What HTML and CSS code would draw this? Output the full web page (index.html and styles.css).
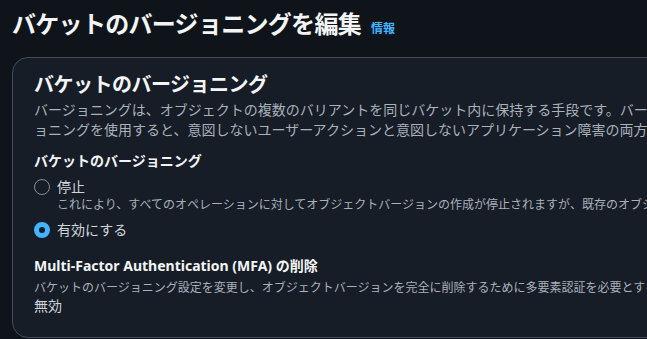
FILE: index.html
```html
<!DOCTYPE html>
<html lang="ja">
<head>
  <meta charset="UTF-8" />
  <title>バケットのバージョニングを編集</title>
  <link rel="stylesheet" href="styles.css">
</head>
<body>
  <div class="page">
    <div class="page-header">
      <h1>バケットのバージョニングを編集</h1>
      <a class="info-link" href="#">情報</a>
    </div>

    <div class="card">
      <h2>バケットのバージョニング</h2>
      <div class="card-desc">
        <span class="line">バージョニングは、オブジェクトの複数のバリアントを同じバケット内に保持する手段です。バージ</span>
        <span class="line">ョニングを使用すると、意図しないユーザーアクションと意図しないアプリケーション障害の両方から簡単に復旧できます。</span>
      </div>

      <div class="field-label">バケットのバージョニング</div>
      <div class="radio-group">
        <div class="radio">
          <span class="radio-dot"></span>
          <span class="radio-label">停止</span>
        </div>
        <div class="radio-desc">これにより、すべてのオペレーションに対してオブジェクトバージョンの作成が停止されますが、既存のオブジェクトバージョンは保持されます。</div>
        <div class="radio checked">
          <span class="radio-dot"></span>
          <span class="radio-label">有効にする</span>
        </div>
      </div>

      <div class="mfa">
        <div class="field-label">Multi-Factor Authentication (MFA) の削除</div>
        <div class="mfa-desc">バケットのバージョニング設定を変更し、オブジェクトバージョンを完全に削除するために多要素認証を必要とする追加の保護レイヤー。</div>
        <div class="mfa-value">無効</div>
      </div>
    </div>
  </div>
</body>
</html>
```

FILE: styles.css
```css
:root {
  --page-bg: #0f141a;
  --card-bg: #161d26;
  --border-color: #414d5c;
  --title-color: #f3f4f6;
  --text-color: #d1d5db;
  --muted-color: #a9b1bb;
  --link-color: #42b4ff;
}

* {
  box-sizing: border-box;
  margin: 0;
  padding: 0;
}

body {
  font-family: "Noto Sans", "Noto Sans CJK JP", sans-serif;
  background-color: var(--page-bg);
  color: var(--text-color);
  overflow: hidden;
  height: 339px;
}

.page {
  padding: 9px 0 0 12px;
}

.page-header {
  display: flex;
  align-items: baseline;
  gap: 10px;
  height: 30px;
}

h1 {
  font-size: 24px;
  line-height: 30px;
  font-weight: 700;
  letter-spacing: -0.7px;
  color: var(--title-color);
}

.info-link {
  font-size: 12px;
  font-weight: 700;
  color: var(--link-color);
  text-decoration: none;
}

.card {
  margin-top: 18px;
  width: 720px;
  background: var(--card-bg);
  border: 1px solid var(--border-color);
  border-radius: 16px;
  padding: 15px 0 22px 21px;
}

h2 {
  font-size: 20px;
  line-height: 24px;
  font-weight: 700;
  letter-spacing: -0.5px;
  color: var(--title-color);
}

.card-desc {
  margin-top: 3px;
  font-size: 14px;
  line-height: 20px;
  color: var(--muted-color);
}

.card-desc .line {
  display: block;
  white-space: nowrap;
}

.field-label {
  margin-top: 11px;
  font-size: 14px;
  line-height: 20px;
  font-weight: 700;
  color: var(--title-color);
}

.radio-group {
  margin-top: 6px;
}

.radio {
  display: flex;
  align-items: center;
  gap: 7px;
  height: 20px;
}

.radio-dot {
  width: 16px;
  height: 16px;
  border-radius: 50%;
  border: 1.5px solid #8c8c94;
  flex-shrink: 0;
}

.radio.checked .radio-dot {
  border: 5px solid var(--link-color);
  background: #0f1b2a;
}

.radio-label {
  font-size: 14px;
  line-height: 20px;
  color: var(--text-color);
}

.radio-desc {
  padding-left: 23px;
  font-size: 12px;
  line-height: 16px;
  color: var(--muted-color);
  white-space: nowrap;
  margin-bottom: 7px;
}

.mfa {
  margin-top: 16px;
}

.mfa .field-label {
  margin-top: 0;
}

.mfa-desc {
  margin-top: 3px;
  font-size: 12px;
  line-height: 18px;
  color: var(--muted-color);
  white-space: nowrap;
}

.mfa-value {
  font-size: 14px;
  line-height: 18px;
  color: var(--text-color);
}
```
